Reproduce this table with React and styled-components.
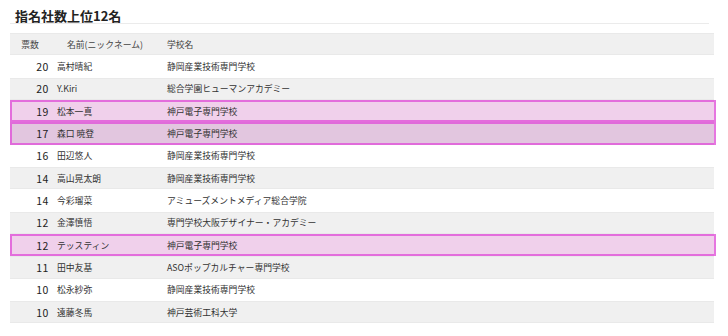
import React from "react";
import styled, { createGlobalStyle } from "styled-components";

const Global = createGlobalStyle`
  html, body { margin: 0; padding: 0; background: #fff; }
  body { font-family: "Noto Sans CJK JP", "Noto Sans", sans-serif; color: #333; }
`;

const Page = styled.div`
  padding: 9px 14px 0 10px;
  width: 728px;
  box-sizing: border-box;
`;

const Title = styled.h2`
  margin: 0 5px 0 0;
  padding: 0 0 1px 5px;
  font-size: 13px;
  line-height: 13px;
  font-weight: 700;
  color: #222;
  border-bottom: 1px solid #ebebeb;
`;

const Table = styled.div`
  margin-top: 9px;
  display: flex;
  flex-direction: column;
`;

const Row = styled.div`
  position: relative;
  display: grid;
  grid-template-columns: 40px 110px 1fr;
  align-items: center;
  height: 22.33px;
  box-sizing: border-box;
  font-size: 8.8px;
  background: ${(p) =>
    p.$hl ? (p.$alt ? "#e2c6df" : "#f0d0eb") : p.$alt ? "#f0f0f0" : "#fff"};
  border-top: 1px solid ${(p) => (p.$alt && !p.$hl ? "#e9e9e9" : "transparent")};
  border-bottom: 1px solid ${(p) => (p.$alt && !p.$hl ? "#e9e9e9" : "transparent")};
  ${(p) =>
    p.$hl &&
    `
    &::after {
      content: "";
      position: absolute;
      left: 0;
      right: -2px;
      top: -1px;
      bottom: -1px;
      border: 2px solid rgba(224, 84, 216, 0.8);
      pointer-events: none;
    }
  `}
`;

const Num = styled.div`
  text-align: right;
  padding-right: 1px;
  font-size: 10.5px;
  letter-spacing: 0.6px;
  color: #222;
`;

const Name = styled.div`
  padding-left: 7px;
  white-space: nowrap;
`;

const School = styled.div`
  padding-left: 7px;
  white-space: nowrap;
`;

const HeadCell = styled.div`
  text-align: ${(p) => p.$align || "center"};
  padding-left: ${(p) => (p.$align === "left" ? "7px" : "0")};
  white-space: nowrap;
  color: #444;
`;

const data = [
  ["20", "高村晴紀", "静岡産業技術専門学校"],
  ["20", "Y.Kiri", "総合学園ヒューマンアカデミー"],
  ["19", "松本一真", "神戸電子専門学校", true],
  ["17", "森口 暁登", "神戸電子専門学校", true],
  ["16", "田辺悠人", "静岡産業技術専門学校"],
  ["14", "高山晃太朗", "静岡産業技術専門学校"],
  ["14", "今彩瑠菜", "アミューズメントメディア総合学院"],
  ["12", "金澤慎悟", "専門学校大阪デザイナー・アカデミー"],
  ["12", "テッスティン", "神戸電子専門学校", true],
  ["11", "田中友基", "ASOポップカルチャー専門学校"],
  ["10", "松永紗弥", "静岡産業技術専門学校"],
  ["10", "遠藤冬馬", "神戸芸術工科大学"],
];

export default function App() {
  return (
    <Page>
      <Global />
      <Title>指名社数上位12名</Title>
      <Table>
        <Row $alt>
          <HeadCell>票数</HeadCell>
          <HeadCell>名前(ニックネーム)</HeadCell>
          <HeadCell $align="left">学校名</HeadCell>
        </Row>
        {data.map(([n, name, school, hl], i) => (
          <Row key={i} $alt={i % 2 === 1} $hl={hl}>
            <Num>{n}</Num>
            <Name>{name}</Name>
            <School>{school}</School>
          </Row>
        ))}
      </Table>
    </Page>
  );
}
